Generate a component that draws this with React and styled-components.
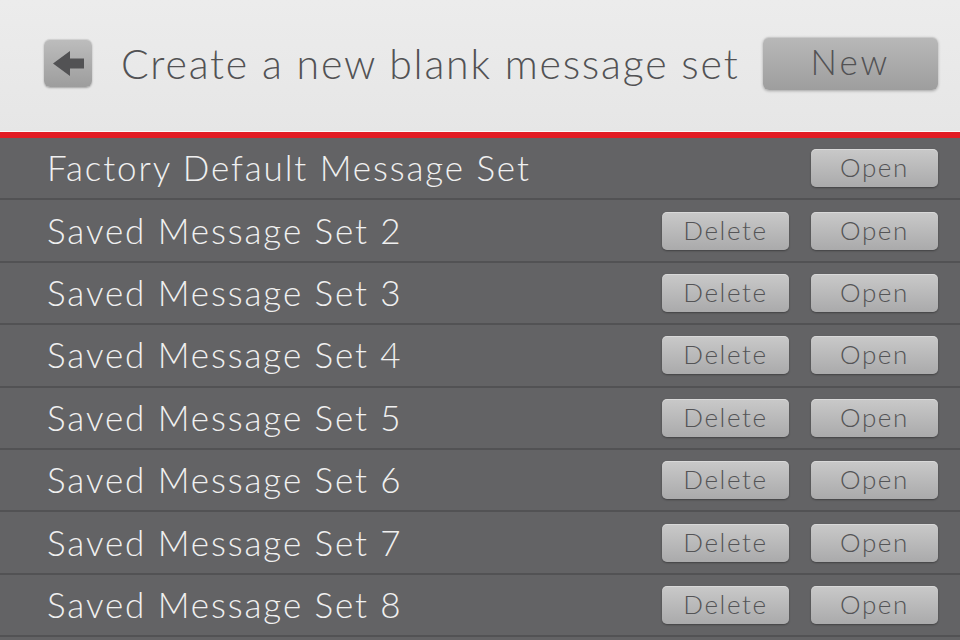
import React from 'react';
import styled, {createGlobalStyle} from 'styled-components';

const GlobalStyle = createGlobalStyle`
	html, body {
		margin: 0;
		padding: 0;
		background: #626264;
	}
	body {
		font-family: "Lato", "Liberation Sans", sans-serif;
	}
`;

const sets = [
	{id: 1, name: 'Factory Default Message Set', deletable: false},
	{id: 2, name: 'Saved Message Set 2', deletable: true},
	{id: 3, name: 'Saved Message Set 3', deletable: true},
	{id: 4, name: 'Saved Message Set 4', deletable: true},
	{id: 5, name: 'Saved Message Set 5', deletable: true},
	{id: 6, name: 'Saved Message Set 6', deletable: true},
	{id: 7, name: 'Saved Message Set 7', deletable: true},
	{id: 8, name: 'Saved Message Set 8', deletable: true},
];

const Page = styled.div`
	width: 960px;
	height: 640px;
	display: flex;
	flex-direction: column;
	overflow: hidden;
`;

const Header = styled.header`
	height: 138px;
	flex-shrink: 0;
	box-sizing: border-box;
	display: flex;
	align-items: center;
	padding: 0 22px 6px 44px;
	background: linear-gradient(#ececec, #e6e6e6);
	border-bottom: 6px solid #e21c24;
	box-shadow: inset 0 -1px 0 #fafafa;
`;

const BackButton = styled.button`
	width: 48px;
	height: 48px;
	padding: 0;
	border: none;
	border-radius: 6px;
	background: linear-gradient(#bdbdbd, #9d9d9d);
	box-shadow: 0 1px 2px rgba(0, 0, 0, 0.3), inset 0 1px 0 rgba(255, 255, 255, 0.3);
	display: flex;
	align-items: center;
	justify-content: center;
`;

const Title = styled.h1`
	flex: 1;
	margin: 0 0 0 29px;
	font-weight: 300;
	font-size: 41px;
	color: #525254;
	letter-spacing: 1.8px;
	white-space: nowrap;
`;

const NewButton = styled.button`
	width: 175px;
	height: 53px;
	border: none;
	border-radius: 6px;
	background: linear-gradient(#b8b8b8, #9e9e9e);
	box-shadow: 0 1px 3px rgba(0, 0, 0, 0.3), inset 0 1px 0 rgba(255, 255, 255, 0.25);
	font-family: inherit;
	font-weight: 300;
	font-size: 35px;
	color: #525254;
	letter-spacing: 3px;
	padding: 0 0 4px;
`;

const List = styled.div`
	flex: 1;
	display: flex;
	flex-direction: column;
	background: #636365;
`;

const Row = styled.div`
	height: 60.4px;
	flex-shrink: 0;
	display: flex;
	align-items: center;
	gap: 22px;
	padding: 0 22px 0 47px;
	border-bottom: 2px solid #525254;
`;

const RowName = styled.span`
	flex: 1;
	font-size: 35px;
	font-weight: 300;
	color: #f0f0f0;
	letter-spacing: 1.9px;
	white-space: nowrap;
	padding-bottom: 2px;
`;

const SmallButton = styled.button`
	width: 127px;
	height: 38px;
	border: none;
	border-radius: 5px;
	background: linear-gradient(#c9c9c9, #aaaaab);
	box-shadow: 0 1px 2px rgba(0, 0, 0, 0.35), inset 0 1px 0 rgba(255, 255, 255, 0.3);
	font-family: inherit;
	font-weight: 300;
	font-size: 26px;
	letter-spacing: 1.6px;
	color: #545456;
	padding: 0 0 2px;
`;

const BackArrow = () => (
	<svg width="31" height="25" viewBox="0 0 31 25">
		<path d="M0 12.5 L17 0 L17 7.5 L31 7.5 L31 17.5 L17 17.5 L17 25 Z" fill="#525254" />
	</svg>
);

const App = () => (
	<Page>
		<GlobalStyle />
		<Header>
			<BackButton aria-label="Back"><BackArrow /></BackButton>
			<Title>Create a new blank message set</Title>
			<NewButton>New</NewButton>
		</Header>
		<List>
			{sets.map(set =>
				<Row key={set.id}>
					<RowName>{set.name}</RowName>
					{set.deletable && <SmallButton>Delete</SmallButton>}
					<SmallButton>Open</SmallButton>
				</Row>
			)}
		</List>
	</Page>
);

export default App;
